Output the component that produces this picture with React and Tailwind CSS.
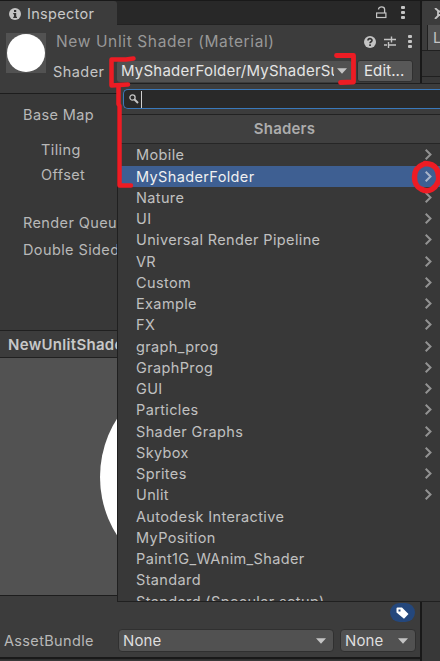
import React from "react";

const folders = [
  "Mobile", "MyShaderFolder", "Nature", "UI", "Universal Render Pipeline", "VR", "Custom",
  "Example", "FX", "graph_prog", "GraphProg", "GUI", "Particles", "Shader Graphs", "Skybox",
  "Sprites", "Unlit",
];
const shaders = [
  "Autodesk Interactive", "MyPosition", "Paint1G_WAnim_Shader", "Standard", "Standard (Specular setup)",
];

function Dots() {
  return (
    <svg width="4" height="13" viewBox="0 0 4 13" fill="#c4c4c4" className="shrink-0">
      <rect x="0" y="0" width="4" height="3" rx="1" />
      <rect x="0" y="5" width="4" height="3" rx="1" />
      <rect x="0" y="10" width="4" height="3" rx="1" />
    </svg>
  );
}

function Caret() {
  return (
    <svg width="10" height="6" viewBox="0 0 10 6" className="shrink-0">
      <path d="M0 0.3h10L5 5.7z" fill="#c4c4c4" />
    </svg>
  );
}

function TabBar() {
  return (
    <div className="flex h-[25px] shrink-0 border-t border-[#191919] bg-[#282828]">
      <div className="flex w-[117px] items-center rounded-tr-[3px] bg-[#3c3c3c] pl-[9px] pt-[2px]">
        <svg width="12" height="12" viewBox="0 0 12 12" className="shrink-0">
          <circle cx="6" cy="6" r="6" fill="#c4c4c4" />
          <path d="M5 2h2.2v2H5zM4.2 5h3v3.7h.8V10H4.2V8.700H5V6.300h-.8z" fill="#333" />
        </svg>
        <span className="ml-[6px] text-[14.5px] tracking-[0.3px] text-[#c8c8c8]">Inspector</span>
      </div>
      <div className="flex flex-1 items-center justify-end border-b border-[#222] pr-[15px]">
        <svg width="11" height="13" viewBox="0 0 11 13" fill="none" stroke="#c4c4c4" className="mr-[14px]">
          <rect x="0.6" y="7" width="9.300" height="4.500" strokeWidth="1.200" />
          <path d="M2.500 3.500C2.500 0 8.600 0 8.600 3.500V7" strokeWidth="1.300" />
        </svg>
        <Dots />
      </div>
    </div>
  );
}

function MaterialHeader() {
  return (
    <div className="flex h-[69px] shrink-0 border-b border-[#1d1d1d] bg-[#3c3c3c]">
      <div className="ml-[6px] mt-[8px] flex size-[40px] shrink-0 items-center justify-center bg-[#525252]">
        <div className="size-[38px] rounded-full bg-white" />
      </div>
      <div className="flex min-w-0 flex-1 flex-col pl-[7px]">
        <div className="flex h-[33px] items-center pr-[8px]">
          <span className="ml-[3px] flex-1 whitespace-nowrap text-[15.5px] tracking-[0.62px] text-[#989898]">
            New Unlit Shader (Material)
          </span>
          <svg width="12" height="12" viewBox="0 0 12 12">
            <circle cx="6" cy="6" r="6" fill="#c4c4c4" />
            <path d="M4 4.500C4 2 8 2 8 4.400 8 5.800 6 5.700 6 7.300" fill="none" stroke="#333" strokeWidth="1.600" />
            <rect x="5.200" y="8.300" width="1.700" height="1.700" fill="#333" />
          </svg>
          <svg width="12" height="12" viewBox="0 0 12 12" stroke="#c4c4c4" strokeWidth="1.400" className="ml-[8px]">
            <path d="M0 3.500h7M7 3.500h5M7.500 0.500v6M0 9h3M5 9h7M4.500 6v6" />
          </svg>
          <div className="ml-[12px] flex"><Dots /></div>
        </div>
        <div className="flex h-[26px] items-center">
          <span className="w-[64px] pt-[2px] text-[14.500px] tracking-[0.450px] text-[#c4c4c4]">Shader</span>
          <div className="flex h-[21px] w-[235px] items-center rounded-[3px] bg-[#515151] pl-[4px] pr-[5px]">
            <span className="h-[21px] min-w-0 flex-1 overflow-hidden whitespace-nowrap text-[15px] leading-[20px] tracking-[0.22px] text-[#e4e4e4]">
              MyShaderFolder/MyShaderSu
            </span>
            <span className="ml-[3px] flex"><Caret /></span>
          </div>
          <div className="ml-[5px] h-[22px] w-[56px] rounded-[3px] border border-[#303030] bg-[#585858] pl-[6px] text-[15px] leading-[19px] tracking-[0.1px] text-[#e8e8e8]">
            Edit...
          </div>
        </div>
      </div>
    </div>
  );
}

function Field({ label, className }) {
  return <div className={"whitespace-nowrap text-[14.500px] leading-[20px] tracking-[0.4px] " + className}>{label}</div>;
}

function Inspector() {
  return (
    <div className="flex w-[420px] shrink-0 flex-col">
      <TabBar />
      <MaterialHeader />
      <div className="h-[236px] shrink-0 bg-[#383838] pt-[11px] text-[#b8b8b8]">
        <Field label="Base Map" className="ml-[23px]" />
        <Field label="Tiling" className="ml-[41px] mt-[15px]" />
        <Field label="Offset" className="ml-[41px] mt-[5px]" />
        <Field label="Render Queue" className="ml-[23px] mt-[28px]" />
        <Field label="Double Sided" className="ml-[23px] mt-[7px]" />
      </div>
      <div className="h-[28px] shrink-0 border-y border-[#202020] bg-[#3c3c3c] pl-[8px] text-[15px] font-semibold leading-[27px] tracking-[0.3px] text-[#c8c8c8]">
        NewUnlitShader
      </div>
      <div className="flex h-[238px] shrink-0 items-center overflow-hidden border-b border-[#1d1d1d] bg-[#525252] pl-[100px]">
        <div className="size-[218px] rounded-full bg-white" />
      </div>
      <div className="flex h-[61px] shrink-0 flex-col bg-[#3c3c3c]">
        <div className="flex h-[33px] items-center justify-end pr-[5px]">
          <div className="flex h-[19px] w-[25px] items-center justify-center rounded-full bg-[#24477c]">
            <svg width="13" height="12" viewBox="0 0 13 12">
              <path fillRule="evenodd" d="M.5 1.500Q.5.500 1.500.500H6L12.500 7 8 11.700.5 5.500zM2.500 2.400v2h2v-2z" fill="#fff" />
            </svg>
          </div>
        </div>
        <div className="flex h-[23px] items-center pl-[4px] text-[#b8b8b8]">
          <span className="w-[114px] pt-[1px] text-[14.500px] tracking-[0.35px]">AssetBundle</span>
          <div className="flex h-[23px] w-[216px] items-center rounded-[4px] border border-[#303030] bg-[#515151] pl-[4px] pr-[7px]">
            <span className="flex-1 text-[15px] leading-[20px] tracking-[0.100px] text-[#dedede]">None</span>
            <Caret />
          </div>
          <div className="ml-[6px] flex h-[23px] w-[76px] items-center rounded-[4px] border border-[#303030] bg-[#515151] pl-[4px] pr-[7px]">
            <span className="flex-1 text-[15px] leading-[20px] tracking-[0.100px] text-[#dedede]">None</span>
            <Caret />
          </div>
        </div>
      </div>
      <div className="h-[3px] shrink-0 border-t-2 border-[#191919] bg-[#303030]" />
    </div>
  );
}

function SidePanel() {
  return (
    <div className="flex w-[20px] shrink-0 flex-col overflow-hidden border-l-2 border-t border-[#191919] bg-[#383838]">
      <div className="h-[24px] shrink-0 rounded-tl-[3px] bg-[#3c3c3c] pl-[12px] pt-[7px]">
        <svg width="12" height="11" viewBox="0 0 12 11" stroke="#c4c4c4" strokeWidth="1.800" fill="none">
          <path d="M1 0l4 3.500h6M1 11l4-4h6M4 3v5" />
        </svg>
      </div>
      <div className="h-[26px] shrink-0 border-b border-[#202020] bg-[#3c3c3c] pl-[5px]">
        <div className="h-[25px] border-l border-[#202020] bg-[#505050] pl-[5px] text-[15px] leading-[26px] text-[#c4c4c4]">L</div>
      </div>
      <div className="h-[26px] shrink-0 border-b border-[#202020]" />
    </div>
  );
}

function MenuRow({ label, folder, selected }) {
  return (
    <div className={"flex h-[21.25px] shrink-0 items-center pl-[18px] pr-[8px] text-[14.500px] leading-[21px] tracking-[0.37px] " + (selected ? "bg-[#3e5f92] text-[#f0f0f0]" : "text-[#c0c0c0]")}>
      <span className="flex-1 whitespace-nowrap">{label}</span>
      {folder && (
        <svg width="7" height="11" viewBox="0 0 7 11" fill="none" stroke={selected ? "#a8b4c8" : "#929292"} strokeWidth="2">
          <path d="M.7.700L5.500 5.500.7 10.300" />
        </svg>
      )}
    </div>
  );
}

function ShaderMenu() {
  return (
    <div className="absolute left-[117px] top-[83px] flex h-[519px] w-[323px] flex-col border-b border-l border-t border-[#202020] bg-[#383838]">
      <div className="h-[31px] shrink-0 border-b border-[#222] bg-[#3c3c3c] pl-[5px] pt-[5px]">
        <div className="flex h-[20px] items-center rounded-l-[5px] border border-r-0 border-[#3a79bb] bg-[#292929] pl-[5px]">
          <svg width="10" height="10" viewBox="0 0 10 10" fill="none" stroke="#c4c4c4">
            <circle cx="3.500" cy="3.500" r="2.600" strokeWidth="1.300" />
            <path d="M5.500 5.500L9 9" strokeWidth="2" />
          </svg>
          <div className="ml-[2px] h-[17px] w-px bg-[#d0d0d0]" />
        </div>
      </div>
      <div className="h-[29px] shrink-0 border-b border-[#262626] bg-[#404040] pl-[11px] text-center text-[15px] font-semibold leading-[28px] tracking-[0.200px] text-[#acacac]">
        Shaders
      </div>
      <div className="flex min-h-0 flex-1 flex-col overflow-hidden pt-[0.25px]">
        {folders.map((name) => (
          <MenuRow key={name} label={name} folder selected={name === "MyShaderFolder"} />
        ))}
        {shaders.map((name) => (
          <MenuRow key={name} label={name} />
        ))}
      </div>
    </div>
  );
}

function Markup() {
  return (
    <svg width="440" height="661" viewBox="0 0 440 661" fill="none" stroke="#ed1c24" strokeLinecap="round" strokeLinejoin="round" className="pointer-events-none absolute left-0 top-0">
      <path d="M133.500 58.500L126 59.500 111.500 59.500V85.500L128 84.500" strokeWidth="4.500" />
      <path d="M118.500 87V104L119.500 106V185.500H131" strokeWidth="4.500" />
      <path d="M336.500 55.500H353.500V82L340.500 82.500" strokeWidth="4.800" />
      <path d="M423 164.500C411 169 413 186 421 189 429 193.500 436 188 438.500 181 439.500 171 436 163.500 425 163.500" strokeWidth="5.500" />
    </svg>
  );
}

export default function App() {
  return (
    <div className="relative flex h-[661px] w-[440px] overflow-hidden bg-[#383838] font-['Inter','Noto_Sans',sans-serif]">
      <Inspector />
      <SidePanel />
      <ShaderMenu />
      <Markup />
    </div>
  );
}
